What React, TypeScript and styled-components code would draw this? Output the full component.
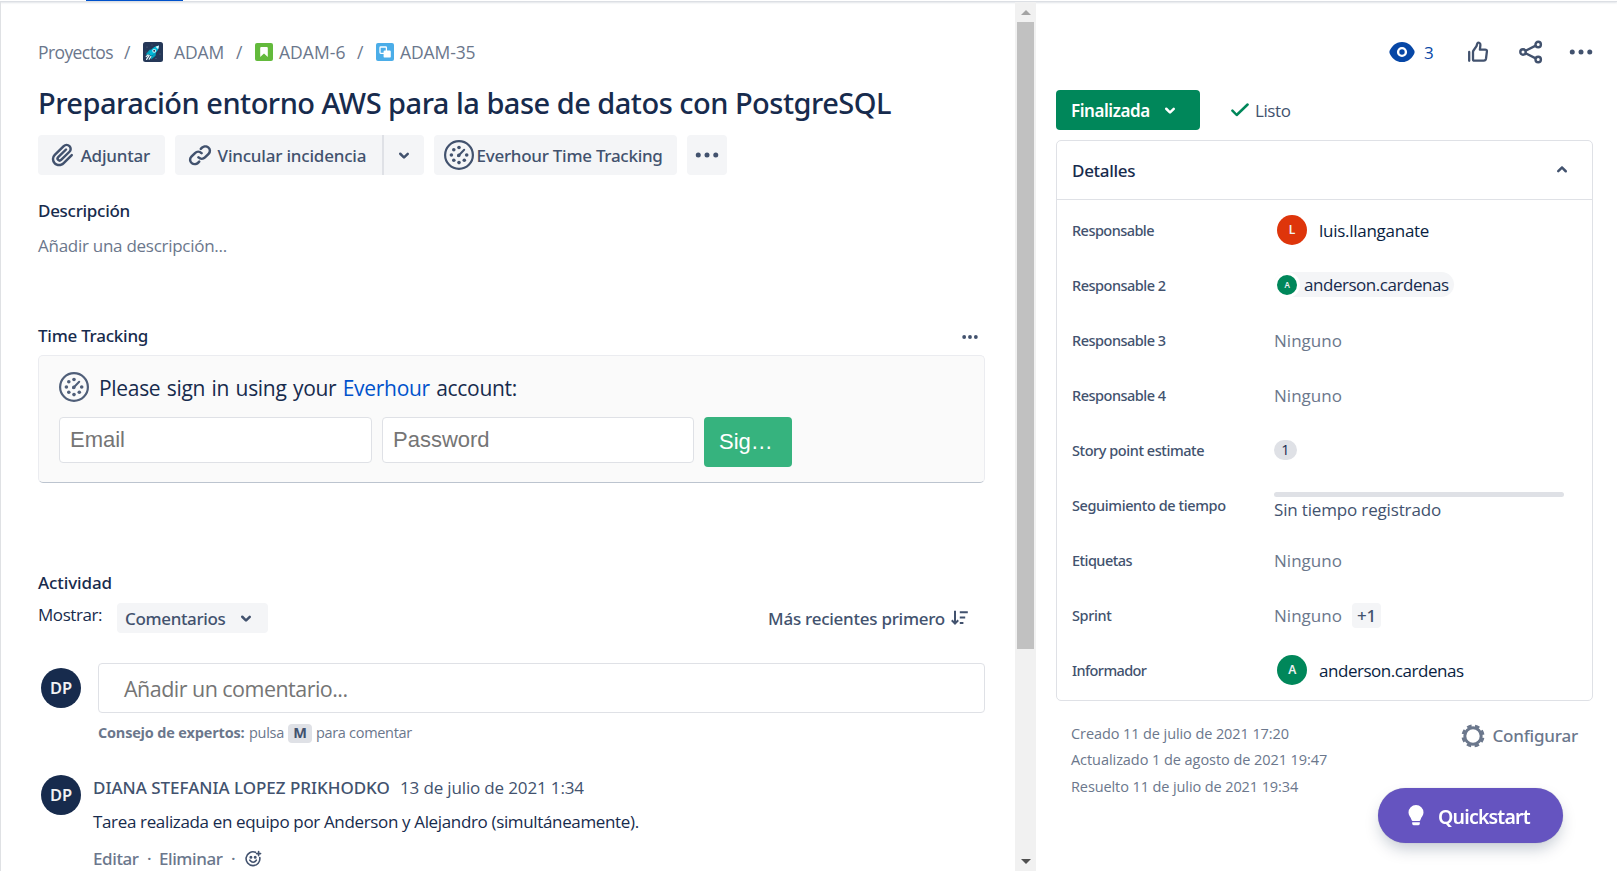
import React from 'react';
import styled, { createGlobalStyle, css } from 'styled-components';

const color = {
  ink: '#172b4d',
  slate: '#42526e',
  muted: '#6b778c',
  subtle: '#f4f5f7',
  line: '#dfe1e6',
  blue: '#0052cc',
  green: '#00875a',
};

const GlobalStyle = createGlobalStyle`
  * { box-sizing: border-box; }
  body {
    margin: 0;
    background: #fff;
    color: ${color.ink};
    font-family: 'Open Sans', 'Noto Sans', sans-serif;
    font-size: 17px;
    line-height: 24px;
    overflow: hidden;
  }
  svg { display: block; flex: none; }
`;

type TextProps = { $track?: number };
const tracking = css<TextProps>`
  letter-spacing: ${(p) => p.$track ?? 0}px;
  white-space: nowrap;
`;
const medium = css`
  font-family: 'Noto Sans', sans-serif;
  font-weight: 500;
`;

/* Page frame */
const Page = styled.div`
  display: flex;
  flex-direction: column;
  height: 871px;
  width: 1617px;
  overflow: hidden;
`;
const TopStrip = styled.div`
  flex: none;
  height: 2px;
  padding-left: 86px;
  border-bottom: 1px solid #dcdfe4;
  box-shadow: 0 1px 2px rgba(9, 30, 66, 0.12);
`;
const ActiveTab = styled.div`
  width: 97px;
  height: 1px;
  background: ${color.blue};
`;
const Columns = styled.div`
  flex: 1;
  min-height: 0;
  display: grid;
  grid-template-columns: 1015px 21px 581px;
`;
const Main = styled.main`
  border-left: 1px solid #dfe1e4;
  padding: 38px 30px 0 37px;
  overflow: hidden;
  display: flex;
  flex-direction: column;
`;

/* Scrollbar */
const ScrollTrack = styled.div`
  background: #f1f1f1;
  display: flex;
  flex-direction: column;
  align-items: center;
`;
const ScrollArrow = styled.div<{ $down?: boolean }>`
  height: 20px;
  display: flex;
  align-items: center;
  margin-top: ${(p) => (p.$down ? 'auto' : 0)};
  &::before {
    content: '';
    border: 5px solid transparent;
    ${(p) =>
      p.$down
        ? 'border-top-color: #505050; border-bottom: 0;'
        : 'border-bottom-color: #a3a3a3; border-top: 0;'}
  }
`;
const ScrollThumb = styled.div`
  width: 17px;
  height: 627px;
  background: #c1c1c1;
`;

/* Header */
const Breadcrumbs = styled.nav`
  flex: none;
  display: flex;
  align-items: center;
  height: 24px;
  font-size: 17.5px;
  color: ${color.muted};
`;
const Crumb = styled.span<TextProps & { $width: number }>`
  ${tracking}
  width: ${(p) => p.$width}px;
`;
const Slash = styled.span`
  width: 7px;
  margin: 0 12px 0 12px;
`;
const CrumbIcon = styled.span<{ $gap: number }>`
  display: flex;
  margin-right: ${(p) => p.$gap}px;
`;
const Title = styled.h1<TextProps>`
  ${medium}
  ${tracking}
  flex: none;
  margin: 21px 0 0;
  font-size: 29px;
  line-height: 36px;
`;
const Toolbar = styled.div`
  flex: none;
  display: flex;
  gap: 10px;
  margin-top: 14px;
`;
const ToolButton = styled.button<TextProps & { $width: number; $pad?: number }>`
  ${medium}
  ${tracking}
  display: flex;
  align-items: center;
  width: ${(p) => p.$width}px;
  height: 40px;
  padding: 0 0 0 ${(p) => p.$pad ?? 5}px;
  border: 0;
  border-radius: 4px;
  background: ${color.subtle};
  color: ${color.slate};
  font-size: 17px;
`;
const SplitButton = styled.div`
  display: flex;
  border-radius: 4px;
  overflow: hidden;
  ${ToolButton} { border-radius: 0; }
  ${ToolButton} + ${ToolButton} { border-left: 2px solid ${color.line}; }
`;

/* Sections */
const SectionHead = styled.div<{ $top: number }>`
  flex: none;
  display: flex;
  justify-content: space-between;
  height: 24px;
  margin-top: ${(p) => p.$top}px;
`;
const SectionTitle = styled.h2<TextProps>`
  ${medium}
  ${tracking}
  margin: 0;
  font-size: 17px;
  line-height: 24px;
`;
const Placeholder = styled.p<TextProps>`
  ${tracking}
  flex: none;
  margin: 11px 0 0;
  color: ${color.muted};
`;
const SmallMore = styled.div`
  padding: 3px 5px 0 0;
  color: ${color.slate};
`;

/* Time tracking panel */
const TrackingPanel = styled.section`
  flex: none;
  height: 128px;
  margin-top: 7px;
  padding: 16px 20px;
  border: 1px solid #ebecf0;
  border-bottom-color: #bcc4cf;
  border-radius: 5px;
  background: #fafafa;
`;
const PanelHead = styled.div`
  display: flex;
  gap: 10px;
  height: 30px;
  color: #505f79;
`;
const PanelText = styled.p<TextProps>`
  ${tracking}
  margin: 0;
  font-size: 21px;
  line-height: 32px;
  word-spacing: 1.3px;
  color: ${color.ink};
`;
const Link = styled.a`
  color: ${color.blue};
`;
const LoginForm = styled.div`
  display: flex;
  gap: 10px;
  margin-top: 15px;
`;
const Field = styled.input<{ $width: number }>`
  width: ${(p) => p.$width}px;
  height: 46px;
  padding: 0 10px;
  border: 1px solid ${color.line};
  border-radius: 4px;
  background: #fff;
  font: 22px 'Liberation Sans', sans-serif;
  &::placeholder { color: #757575; opacity: 1; }
`;
const SignButton = styled.button`
  width: 88px;
  height: 50px;
  padding: 0 0 1px 15px;
  border: 0;
  border-radius: 4px;
  background: #36b37e;
  color: #fff;
  text-align: left;
  font: 22px 'Liberation Sans', sans-serif;
`;

/* Activity */
const FilterRow = styled.div`
  flex: none;
  display: flex;
  height: 30px;
  margin-top: 8px;
`;
const FilterLabel = styled.span<TextProps>`
  ${tracking}
  width: 79px;
`;
const FilterButton = styled.button<TextProps>`
  ${medium}
  ${tracking}
  display: flex;
  align-items: center;
  justify-content: space-between;
  width: 151px;
  padding: 0 7px 0 8px;
  border: 0;
  border-radius: 4px;
  background: ${color.subtle};
  color: ${color.slate};
  font-size: 17px;
`;
const SortButton = styled.div<TextProps>`
  ${medium}
  ${tracking}
  display: flex;
  align-items: center;
  gap: 6px;
  margin: 0 17px 0 auto;
  color: ${color.slate};
  span { padding-top: 1px; }
`;
const Entry = styled.div<{ $top: number; $gap: number }>`
  flex: none;
  display: flex;
  gap: ${(p) => p.$gap}px;
  margin-top: ${(p) => p.$top}px;
  padding-left: 3px;
`;
const EntryBody = styled.div`
  flex: 1;
`;
const Avatar = styled.div<{ $size: number; $bg: string; $font: number; $top?: number }>`
  ${medium}
  flex: none;
  display: flex;
  align-items: center;
  justify-content: center;
  width: ${(p) => p.$size}px;
  height: ${(p) => p.$size}px;
  margin-top: ${(p) => p.$top ?? 0}px;
  border-radius: 50%;
  background: ${(p) => p.$bg};
  color: #f1f2f4;
  font-size: ${(p) => p.$font}px;
  font-weight: 600;
`;
const CommentField = styled.div<TextProps>`
  ${tracking}
  height: 50px;
  padding: 0 25px;
  border: 1px solid ${color.line};
  border-radius: 4px;
  font-size: 21.5px;
  line-height: 50px;
  color: #757575;
`;
const Tip = styled.div<TextProps>`
  ${tracking}
  display: flex;
  margin-top: 10px;
  font-size: 14.5px;
  line-height: 20px;
  color: ${color.muted};
  b { width: 151px; letter-spacing: -0.18px; }
`;
const Key = styled.kbd`
  width: 24px;
  height: 19px;
  margin: 1px 4px 0;
  border-radius: 4px;
  background: ${color.line};
  color: ${color.slate};
  font: 700 14.5px/18px 'Open Sans', sans-serif;
  text-align: center;
`;
const Byline = styled.div<TextProps>`
  ${tracking}
  display: flex;
  padding-top: 1px;
  color: ${color.slate};
`;
const Author = styled.span<TextProps>`
  ${medium}
  ${tracking}
  width: 307px;
`;
const CommentText = styled.p<TextProps>`
  ${tracking}
  margin: 10px 0 0;
`;
const CommentActions = styled.div`
  ${medium}
  display: flex;
  margin-top: 13px;
  color: ${color.muted};
`;
const CommentAction = styled.span<TextProps & { $width: number }>`
  ${tracking}
  width: ${(p) => p.$width}px;
`;
const Dot = styled.span<{ $width: number }>`
  width: ${(p) => p.$width}px;
`;
const ReactionIcon = styled.span`
  color: ${color.slate};
  padding-top: 3px;
`;

/* Sidebar */
const Sidebar = styled.aside`
  padding: 38px 24px 0 20px;
`;
const ActionBar = styled.div`
  display: flex;
  align-items: center;
  justify-content: flex-end;
  height: 24px;
  margin-right: -3px;
  color: ${color.slate};
`;
const WatchCount = styled.span`
  width: 9px;
  margin: 0 30px 0 7px;
  padding-top: 1px;
  color: #0747a6;
`;
const ShareSlot = styled.span`
  margin: 0 20px 0 23px;
`;
const StatusRow = styled.div`
  display: flex;
  align-items: center;
  height: 40px;
  margin-top: 26px;
`;
const StatusButton = styled.button<TextProps>`
  ${medium}
  ${tracking}
  font-weight: 600;
  display: flex;
  align-items: center;
  justify-content: space-between;
  width: 144px;
  height: 40px;
  padding: 0 15px;
  border: 0;
  border-radius: 4px;
  background: ${color.green};
  color: #fff;
  font-size: 17px;
`;
const Resolution = styled.span<TextProps>`
  ${tracking}
  display: flex;
  align-items: center;
  gap: 6px;
  margin-left: 31px;
  color: ${color.slate};
  span { padding-top: 2px; }
`;
const Card = styled.section`
  height: 561px;
  margin-top: 10px;
  border: 1px solid ${color.line};
  border-radius: 5px;
`;
const CardHead = styled.div`
  display: flex;
  align-items: center;
  justify-content: space-between;
  height: 59px;
  padding: 0 15px;
  border-bottom: 1px solid ${color.line};
  color: ${color.slate};
  ${SectionTitle} { color: ${color.ink}; padding-top: 2px; }
`;
const DetailList = styled.dl`
  margin: 3px 0 0;
`;
const DetailRow = styled.div`
  display: grid;
  grid-template-columns: 202px 290px;
  align-items: center;
  height: 55px;
  padding-left: 15px;
`;
const DetailName = styled.dt<TextProps>`
  ${medium}
  ${tracking}
  padding-bottom: 2px;
  font-size: 14.5px;
  color: ${color.slate};
`;
const DetailValue = styled.dd`
  display: flex;
  align-items: center;
  margin: 0;
`;
const Person = styled.span<TextProps>`
  ${tracking}
  display: flex;
  align-items: center;
  gap: 12px;
  padding: 0 0 1px 3px;
  span { padding-top: 2px; }
  color: #091e42;
`;
const Chip = styled.span<TextProps>`
  ${tracking}
  display: flex;
  align-items: center;
  gap: 4px;
  height: 25px;
  width: 180px;
  margin-bottom: 2px;
  border-radius: 13px;
  background: ${color.subtle};
  ${Avatar} { box-sizing: content-box; border: 3px solid #fff; }
`;
const Empty = styled.span<TextProps>`
  ${tracking}
  padding-top: 1px;
  color: ${color.muted};
`;
const Badge = styled.span`
  width: 23px;
  height: 20px;
  margin-bottom: 1px;
  border-radius: 10px;
  background: ${color.line};
  font-size: 14.5px;
  line-height: 19px;
  text-align: center;
`;
const Progress = styled.div<TextProps>`
  ${tracking}
  padding-top: 2px;
  color: ${color.slate};
  line-height: 22px;
  &::before {
    content: '';
    display: block;
    width: 290px;
    height: 5px;
    margin-bottom: 2px;
    border-radius: 3px;
    background: ${color.line};
  }
`;
const MoreTag = styled.span`
  ${medium}
  width: 29px;
  height: 25px;
  margin-left: 10px;
  border-radius: 4px;
  background: ${color.subtle};
  color: ${color.slate};
  text-align: center;
  line-height: 26px;
  letter-spacing: -0.3px;
`;
const Footer = styled.footer`
  display: flex;
  justify-content: space-between;
  margin-top: 19px;
  padding: 0 15px;
  color: ${color.muted};
`;
const Stamps = styled.div`
  padding-top: 1px;
  font-size: 14.5px;
  line-height: 26.4px;
`;
const Stamp = styled.div<TextProps>`
  ${tracking}
`;
const Configure = styled.div<TextProps>`
  ${medium}
  ${tracking}
  display: flex;
  align-items: center;
  gap: 7px;
  height: 32px;
`;
const Quickstart = styled.button<TextProps>`
  ${medium}
  ${tracking}
  position: fixed;
  left: 1378px;
  top: 788px;
  display: flex;
  align-items: center;
  gap: 14px;
  width: 185px;
  height: 55px;
  padding: 0 0 0 30px;
  border: 0;
  border-radius: 28px;
  background: #6554c0;
  color: #fff;
  font-size: 19.5px;
  font-weight: 600;
  box-shadow: 0 8px 16px -3px rgba(9, 30, 66, 0.25), 0 0 1px rgba(9, 30, 66, 0.31);
  span { padding-top: 1px; }
`;

/* Icons */
const Chevron = ({ up }: { up?: boolean }) => (
  <svg width="30" height="30" viewBox="0 0 24 24" fill="currentColor">
    <path
      transform={up ? 'rotate(180 12 12)' : undefined}
      d="M8.292 10.293a1.009 1.009 0 0 0 0 1.419l2.939 2.965c.218.215.5.322.779.322s.556-.107.769-.322l2.93-2.955a1.01 1.01 0 0 0 0-1.419.987.987 0 0 0-1.406 0l-2.298 2.317-2.307-2.327a.99.99 0 0 0-1.406 0z"
    />
  </svg>
);
const More = ({ size = 30, r = 2 }: { size?: number; r?: number }) => (
  <svg width={size} height={size} viewBox="0 0 24 24" fill="currentColor">
    <circle cx="5" cy="12" r={r} />
    <circle cx="12" cy="12" r={r} />
    <circle cx="19" cy="12" r={r} />
  </svg>
);
const Attach = () => (
  <svg width="30" height="30" viewBox="0 0 24 24" fill="currentColor">
    <path d="M11.643 17.965c-1.53 1.495-4.016 1.496-5.542.004a3.773 3.773 0 0 1 .002-5.412l7.147-6.985a2.316 2.316 0 0 1 3.233-.003c.893.873.895 2.282.004 3.153l-6.703 6.55a.653.653 0 0 1-.914-.008.62.62 0 0 1 0-.902l6.229-6.087a.941.941 0 0 0 0-1.353.995.995 0 0 0-1.384 0l-6.229 6.087a2.502 2.502 0 0 0 0 3.607 2.643 2.643 0 0 0 3.683.009l6.703-6.55a4.074 4.074 0 0 0-.003-5.859 4.306 4.306 0 0 0-6.002.003L4.72 11.204a5.653 5.653 0 0 0-.002 8.118c2.292 2.239 6.015 2.238 8.31-.005l6.686-6.533a.941.941 0 0 0 0-1.353.995.995 0 0 0-1.384 0l-6.687 6.534z" />
  </svg>
);
const linkHalf =
  'M12.856 5.457l-.937.92a1.002 1.002 0 0 0 0 1.437 1.047 1.047 0 0 0 1.463 0l.984-.966c.967-.95 2.542-1.135 3.602-.288a2.54 2.54 0 0 1 .203 3.81l-2.903 2.852a2.646 2.646 0 0 1-3.696 0l-.11-.108a1.047 1.047 0 0 0-1.464 0 1.002 1.002 0 0 0 0 1.437l.11.108a4.708 4.708 0 0 0 6.573 0l2.903-2.852a4.479 4.479 0 0 0-.355-6.682c-1.917-1.523-4.747-1.21-6.373.332z';
const LinkIcon = () => (
  <svg width="30" height="30" viewBox="0 0 24 24" fill="currentColor">
    <path d={linkHalf} />
    <path d={linkHalf} transform="rotate(180 12 12.2)" />
  </svg>
);
const Gauge = () => (
  <svg width="30" height="30" viewBox="0 0 30 30" fill="currentColor">
    <circle cx="15" cy="15" r="13.9" fill="none" stroke="currentColor" strokeWidth="2.2" />
    {[
      [15, 7.5], [9.8, 9.7], [7.4, 15], [9.8, 20.3], [15, 22.6], [20.3, 20.3], [22.7, 15],
    ].map(([x, y]) => (
      <circle key={`${x}-${y}`} cx={x} cy={y} r="1.8" />
    ))}
    <path d="M14.2 16l6-6.2" stroke="currentColor" strokeWidth="2" strokeLinecap="round" />
    <circle cx="14.8" cy="15.4" r="1.8" />
  </svg>
);
const Rocket = () => (
  <svg width="20" height="20" viewBox="0 0 20 20">
    <rect width="20" height="20" rx="2.5" fill="#253858" />
    <g fill="#5e6c84">
      <circle cx="4" cy="5" r=".6" />
      <circle cx="9" cy="3" r=".5" />
      <circle cx="17" cy="12" r=".6" />
      <circle cx="13" cy="16.5" r=".6" />
      <circle cx="3" cy="10" r=".5" />
    </g>
    <path d="M2.6 12.4l4-4.6 3.2-.2-4 5.2zM8 17.6l4.6-3.8.3-3.4-4.8 4.2z" fill="#00a3bf" />
    <path d="M6 12c1.6-4.6 5-7.6 10-8.4-.4 5-3.4 8.400-8 10.400z" fill="#00b8d9" />
    <path d="M12.6 4.8L16 3.6 15.2 7.2z" fill="#e6fcff" />
    <circle cx="11.2" cy="8.8" r="1.9" fill="#e6fcff" />
    <circle cx="11.2" cy="8.8" r="1" fill="#253858" />
    <path d="M6.2 13.4l-2.6 4M7.8 14.6l-1.6 2.6M5 12.8l-1.8 1.8" stroke="#e6fcff" strokeWidth="1.2" strokeLinecap="round" />
  </svg>
);
const Story = () => (
  <svg width="18" height="18" viewBox="0 0 18 18">
    <rect width="18" height="18" rx="2" fill="#63ba3c" />
    <path d="M5.2 14V5q0-1 1-1h5.6q1 0 1 1v9L9 10.6z" fill="#fff" />
  </svg>
);
const Subtask = () => (
  <svg width="18" height="18" viewBox="0 0 18 18">
    <rect width="18" height="18" rx="2" fill="#4bade8" />
    <rect x="4" y="4" width="6.4" height="6.4" rx=".8" fill="none" stroke="#fff" strokeWidth="1.3" />
    <rect x="7.6" y="7.6" width="7.2" height="7" rx="1.2" fill="#fff" />
  </svg>
);
const Eye = () => (
  <svg width="30" height="30" viewBox="0 0 30 30">
    <path d="M15 5C8.500 5 4.500 9.800 2.700 13.600q-.7 1.400 0 2.800C4.500 20.200 8.500 25 15 25s10.500-4.800 12.300-8.600q.7-1.400 0-2.800C25.500 9.800 21.500 5 15 5z" fill="#0747a6" />
    <circle cx="15" cy="15" r="3.9" fill="#0747a6" stroke="#fff" strokeWidth="2.4" />
  </svg>
);
const ThumbUp = () => (
  <svg width="30" height="30" viewBox="0 0 30 30" fill="none" stroke="currentColor" strokeWidth="2.3" strokeLinejoin="round" strokeLinecap="round">
    <path d="M6.200 15v8.800" />
    <path d="M10 22.500V15q0-.8.500-1.500l3-4.300.8-2.700c.5-1.500 3.300-.9 3.100 1.300l-.5 4.800h5.200q2 0 1.800 1.900l-.9 7.200q-.3 2-2.300 2h-9.200q-1.500 0-1.500-1.200z" />
  </svg>
);
const Share = () => (
  <svg width="30" height="30" viewBox="0 0 30 30" fill="none" stroke="currentColor" strokeWidth="2.4">
    <circle cx="7" cy="15" r="2.7" />
    <circle cx="22.2" cy="7.5" r="2.7" />
    <circle cx="22.2" cy="22.5" r="2.7" />
    <path d="M9.600 13.700l10.100-5.100M9.600 16.300l10.100 5.100" />
  </svg>
);
const Check = () => (
  <svg width="18" height="14" viewBox="0 0 18 14" fill="none">
    <path d="M1.400 7.600l4.300 4.400L16.600 1.500" stroke="#00875a" strokeWidth="2.5" strokeLinecap="round" strokeLinejoin="round" />
  </svg>
);
const Sort = () => (
  <svg width="17" height="16" viewBox="0 0 17 16" fill="none" stroke="currentColor" strokeWidth="2">
    <path d="M4 .8v12M.8 10.200L4 13.600l3.200-3.400" />
    <path d="M8.800 2.200h8M8.800 7.600h5.400M8.800 12.900h3.600" />
  </svg>
);
const Smiley = () => (
  <svg width="18" height="18" viewBox="0 0 18 18" fill="none" stroke="currentColor" strokeWidth="1.6" strokeLinecap="round">
    <path d="M10.500 2.300A6.900 6.900 0 1 0 14.800 7.600" />
    <path d="M4.900 10.200q3.200 4.200 6.400 0" />
    <path d="M13.600 1.600v4M11.600 3.600h4" />
    <circle cx="5.9" cy="7.3" r=".7" fill="currentColor" />
    <circle cx="10.2" cy="7.3" r=".7" fill="currentColor" />
  </svg>
);
const Gear = () => (
  <svg width="24" height="24" viewBox="0 0 24 24" fill="none" stroke="currentColor">
    <circle cx="12" cy="12" r="8.2" strokeWidth="3" />
    <circle cx="12" cy="12" r="10.2" strokeWidth="2.6" strokeDasharray="4.6 3.411" transform="rotate(9.6 12 12)" />
  </svg>
);
const Bulb = () => (
  <svg width="16" height="21" viewBox="0 0 16 21" fill="#fff">
    <path d="M8 0a7.500 7.500 0 0 1 7.500 7.600c0 3-2.200 4.500-3 7.200q-.3 1.200-1.300 1.200H4.800q-1 0-1.300-1.200C2.700 12.100.5 10.600.5 7.600A7.500 7.500 0 0 1 8 0z" />
    <path d="M4.200 17.200h7.600v1.600q0 1.400-1.400 1.400H5.600q-1.400 0-1.400-1.400z" />
  </svg>
);

type Detail = { name: string; track: number; value: React.ReactNode };
const none = <Empty $track={0.03}>Ninguno</Empty>;
const details: Detail[] = [
  {
    name: 'Responsable',
    track: -0.55,
    value: (
      <Person $track={-0.27}>
        <Avatar $size={30} $bg="#de350b" $font={12}>L</Avatar>
        <span>luis.llanganate</span>
      </Person>
    ),
  },
  {
    name: 'Responsable 2',
    track: -0.5,
    value: (
      <Chip $track={-0.46}>
        <Avatar $size={20} $bg={color.green} $font={8}>A</Avatar>
        anderson.cardenas
      </Chip>
    ),
  },
  { name: 'Responsable 3', track: -0.5, value: none },
  { name: 'Responsable 4', track: -0.5, value: none },
  { name: 'Story point estimate', track: -0.44, value: <Badge>1</Badge> },
  { name: 'Seguimiento de tiempo', track: -0.4, value: <Progress $track={-0.16}>Sin tiempo registrado</Progress> },
  { name: 'Etiquetas', track: -0.54, value: none },
  { name: 'Sprint', track: -0.36, value: <>{none}<MoreTag>+1</MoreTag></> },
  {
    name: 'Informador',
    track: -0.6,
    value: (
      <Person $track={-0.46}>
        <Avatar $size={30} $bg={color.green} $font={12}>A</Avatar>
        <span>anderson.cardenas</span>
      </Person>
    ),
  },
];

export default function App() {
  return (
    <Page>
      <GlobalStyle />
      <TopStrip><ActiveTab /></TopStrip>
      <Columns>
        <Main>
          <Breadcrumbs>
            <Crumb $track={-0.59} $width={74}>Proyectos</Crumb>
            <Slash>/</Slash>
            <CrumbIcon $gap={11}><Rocket /></CrumbIcon>
            <Crumb $track={-0.14} $width={50}>ADAM</Crumb>
            <Slash>/</Slash>
            <CrumbIcon $gap={6}><Story /></CrumbIcon>
            <Crumb $track={0.05} $width={66}>ADAM-6</Crumb>
            <Slash>/</Slash>
            <CrumbIcon $gap={6}><Subtask /></CrumbIcon>
            <Crumb $track={-0.1} $width={76}>ADAM-35</Crumb>
          </Breadcrumbs>
          <Title $track={-0.51}>Preparación entorno AWS para la base de datos con PostgreSQL</Title>
          <Toolbar>
            <ToolButton $track={-0.19} $width={127} $pad={10}><Attach /><span>&thinsp;Adjuntar</span></ToolButton>
            <SplitButton>
              <ToolButton $track={-0.2} $width={207} $pad={10}><LinkIcon /><span>&thinsp;Vincular incidencia</span></ToolButton>
              <ToolButton $width={42} $pad={5}><Chevron /></ToolButton>
            </SplitButton>
            <ToolButton $track={-0.27} $width={243} $pad={10}><Gauge /><span>&thinsp;Everhour Time Tracking</span></ToolButton>
            <ToolButton $width={40}><More /></ToolButton>
          </Toolbar>

          <SectionHead $top={24}><SectionTitle $track={-0.29}>Descripción</SectionTitle></SectionHead>
          <Placeholder $track={-0.27}>Añadir una descripción...</Placeholder>

          <SectionHead $top={66}>
            <SectionTitle $track={-0.25}>Time Tracking</SectionTitle>
            <SmallMore><More size={20} r={2.3} /></SmallMore>
          </SectionHead>
          <TrackingPanel>
            <PanelHead>
              <Gauge />
              <PanelText $track={-0.31}>
                Please sign in using your <Link>Everhour</Link> account:
              </PanelText>
            </PanelHead>
            <LoginForm>
              <Field $width={313} placeholder="Email" />
              <Field $width={312} placeholder="Password" type="password" />
              <SignButton>Sig…</SignButton>
            </LoginForm>
          </TrackingPanel>

          <SectionHead $top={88}><SectionTitle $track={-0.1}>Actividad</SectionTitle></SectionHead>
          <FilterRow>
            <FilterLabel $track={-0.43}>Mostrar:</FilterLabel>
            <FilterButton $track={-0.35}>Comentarios<Chevron /></FilterButton>
            <SortButton $track={-0.26}><span>Más recientes primero</span><Sort /></SortButton>
          </FilterRow>

          <Entry $top={30} $gap={17}>
            <Avatar $size={40} $bg={color.ink} $font={16.5} $top={5}>DP</Avatar>
            <EntryBody>
              <CommentField $track={-0.53}>Añadir un comentario...</CommentField>
              <Tip $track={-0.3}><b>Consejo de expertos:</b>pulsa<Key>M</Key>para comentar</Tip>
            </EntryBody>
          </Entry>
          <Entry $top={32} $gap={12}>
            <Avatar $size={40} $bg={color.ink} $font={16.5}>DP</Avatar>
            <EntryBody>
              <Byline $track={-0.15}><Author $track={-0.02}>DIANA STEFANIA LOPEZ PRIKHODKO</Author>13 de julio de 2021 1:34</Byline>
              <CommentText $track={-0.35}>Tarea realizada en equipo por Anderson y Alejandro (simultáneamente).</CommentText>
              <CommentActions>
                <CommentAction $track={-0.4} $width={54}>Editar</CommentAction>
                <Dot $width={12}>·</Dot>
                <CommentAction $track={-0.43} $width={72}>Eliminar</CommentAction>
                <Dot $width={14}>·</Dot>
                <ReactionIcon><Smiley /></ReactionIcon>
              </CommentActions>
            </EntryBody>
          </Entry>
        </Main>

        <ScrollTrack>
          <ScrollArrow />
          <ScrollThumb />
          <ScrollArrow $down />
        </ScrollTrack>

        <Sidebar>
          <ActionBar>
            <Eye />
            <WatchCount>3</WatchCount>
            <ThumbUp />
            <ShareSlot><Share /></ShareSlot>
            <More />
          </ActionBar>
          <StatusRow>
            <StatusButton $track={-0.45}>Finalizada<Chevron /></StatusButton>
            <Resolution $track={-0.42}><Check /><span>Listo</span></Resolution>
          </StatusRow>
          <Card>
            <CardHead><SectionTitle $track={-0.3}>Detalles</SectionTitle><Chevron up /></CardHead>
            <DetailList>
              {details.map((d) => (
                <DetailRow key={d.name}>
                  <DetailName $track={d.track}>{d.name}</DetailName>
                  <DetailValue>{d.value}</DetailValue>
                </DetailRow>
              ))}
            </DetailList>
          </Card>
          <Footer>
            <Stamps>
              <Stamp $track={-0.09}>Creado 11 de julio de 2021 17:20</Stamp>
              <Stamp $track={-0.06}>Actualizado 1 de agosto de 2021 19:47</Stamp>
              <Stamp $track={-0.1}>Resuelto 11 de julio de 2021 19:34</Stamp>
            </Stamps>
            <Configure $track={-0.19}><Gear />Configurar</Configure>
          </Footer>
        </Sidebar>
      </Columns>
      <Quickstart $track={-0.8}><Bulb /><span>Quickstart</span></Quickstart>
    </Page>
  );
}
